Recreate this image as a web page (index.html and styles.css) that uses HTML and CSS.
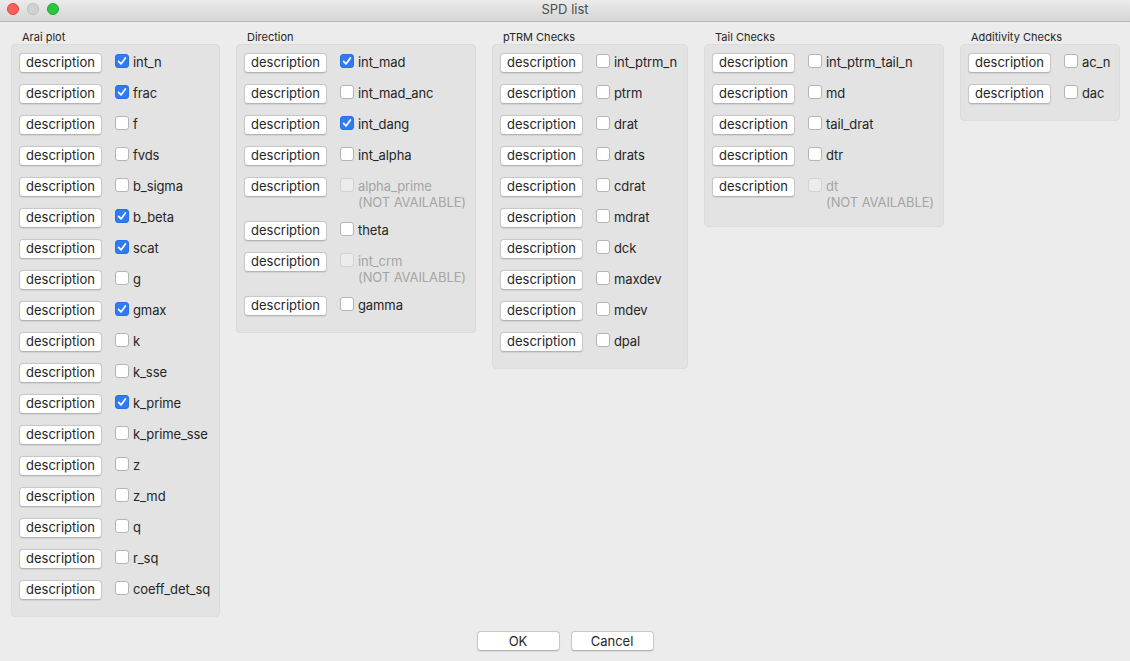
FILE: index.html
```html
<!DOCTYPE html>
<html>
<head>
<meta charset="utf-8">
<link rel="stylesheet" href="styles.css">
<title>SPD list</title>
</head>
<body>
<div class="window">
  <div class="titlebar">
    <div class="lights">
      <span class="light red"></span>
      <span class="light gray"></span>
      <span class="light green"></span>
    </div>
    <div class="title">SPD list</div>
  </div>

  <div class="groups">
    <section class="group w-arai">
      <div class="group-title">Arai plot</div>
      <div class="box">
        <div class="row"><button class="btn">description</button><span class="cb checked"><svg viewBox="0 0 14 14"><path d="M3.6 7.3 L6 9.9 L10.4 3.9"/></svg></span><span class="lbl">int_n</span></div>
        <div class="row"><button class="btn">description</button><span class="cb checked"><svg viewBox="0 0 14 14"><path d="M3.6 7.3 L6 9.9 L10.4 3.9"/></svg></span><span class="lbl">frac</span></div>
        <div class="row"><button class="btn">description</button><span class="cb"></span><span class="lbl">f</span></div>
        <div class="row"><button class="btn">description</button><span class="cb"></span><span class="lbl">fvds</span></div>
        <div class="row"><button class="btn">description</button><span class="cb"></span><span class="lbl">b_sigma</span></div>
        <div class="row"><button class="btn">description</button><span class="cb checked"><svg viewBox="0 0 14 14"><path d="M3.6 7.3 L6 9.9 L10.4 3.9"/></svg></span><span class="lbl">b_beta</span></div>
        <div class="row"><button class="btn">description</button><span class="cb checked"><svg viewBox="0 0 14 14"><path d="M3.6 7.3 L6 9.9 L10.4 3.9"/></svg></span><span class="lbl">scat</span></div>
        <div class="row"><button class="btn">description</button><span class="cb"></span><span class="lbl">g</span></div>
        <div class="row"><button class="btn">description</button><span class="cb checked"><svg viewBox="0 0 14 14"><path d="M3.6 7.3 L6 9.9 L10.4 3.9"/></svg></span><span class="lbl">gmax</span></div>
        <div class="row"><button class="btn">description</button><span class="cb"></span><span class="lbl">k</span></div>
        <div class="row"><button class="btn">description</button><span class="cb"></span><span class="lbl">k_sse</span></div>
        <div class="row"><button class="btn">description</button><span class="cb checked"><svg viewBox="0 0 14 14"><path d="M3.6 7.3 L6 9.9 L10.4 3.9"/></svg></span><span class="lbl">k_prime</span></div>
        <div class="row"><button class="btn">description</button><span class="cb"></span><span class="lbl">k_prime_sse</span></div>
        <div class="row"><button class="btn">description</button><span class="cb"></span><span class="lbl">z</span></div>
        <div class="row"><button class="btn">description</button><span class="cb"></span><span class="lbl">z_md</span></div>
        <div class="row"><button class="btn">description</button><span class="cb"></span><span class="lbl">q</span></div>
        <div class="row"><button class="btn">description</button><span class="cb"></span><span class="lbl">r_sq</span></div>
        <div class="row"><button class="btn">description</button><span class="cb"></span><span class="lbl">coeff_det_sq</span></div>
      </div>
    </section>

    <section class="group w-dir">
      <div class="group-title">Direction</div>
      <div class="box">
        <div class="row"><button class="btn">description</button><span class="cb checked"><svg viewBox="0 0 14 14"><path d="M3.6 7.3 L6 9.9 L10.4 3.9"/></svg></span><span class="lbl">int_mad</span></div>
        <div class="row"><button class="btn">description</button><span class="cb"></span><span class="lbl">int_mad_anc</span></div>
        <div class="row"><button class="btn">description</button><span class="cb checked"><svg viewBox="0 0 14 14"><path d="M3.6 7.3 L6 9.9 L10.4 3.9"/></svg></span><span class="lbl">int_dang</span></div>
        <div class="row"><button class="btn">description</button><span class="cb"></span><span class="lbl">int_alpha</span></div>
        <div class="row"><button class="btn">description</button><span class="cb disabled"></span><span class="lbl disabled">alpha_prime<br>(NOT AVAILABLE)</span></div>
        <div class="row"><button class="btn">description</button><span class="cb"></span><span class="lbl">theta</span></div>
        <div class="row"><button class="btn">description</button><span class="cb disabled"></span><span class="lbl disabled">int_crm<br>(NOT AVAILABLE)</span></div>
        <div class="row"><button class="btn">description</button><span class="cb"></span><span class="lbl">gamma</span></div>
      </div>
    </section>

    <section class="group w-ptrm">
      <div class="group-title">pTRM Checks</div>
      <div class="box">
        <div class="row"><button class="btn">description</button><span class="cb"></span><span class="lbl">int_ptrm_n</span></div>
        <div class="row"><button class="btn">description</button><span class="cb"></span><span class="lbl">ptrm</span></div>
        <div class="row"><button class="btn">description</button><span class="cb"></span><span class="lbl">drat</span></div>
        <div class="row"><button class="btn">description</button><span class="cb"></span><span class="lbl">drats</span></div>
        <div class="row"><button class="btn">description</button><span class="cb"></span><span class="lbl">cdrat</span></div>
        <div class="row"><button class="btn">description</button><span class="cb"></span><span class="lbl">mdrat</span></div>
        <div class="row"><button class="btn">description</button><span class="cb"></span><span class="lbl">dck</span></div>
        <div class="row"><button class="btn">description</button><span class="cb"></span><span class="lbl">maxdev</span></div>
        <div class="row"><button class="btn">description</button><span class="cb"></span><span class="lbl">mdev</span></div>
        <div class="row"><button class="btn">description</button><span class="cb"></span><span class="lbl">dpal</span></div>
      </div>
    </section>

    <section class="group w-tail">
      <div class="group-title">Tail Checks</div>
      <div class="box">
        <div class="row"><button class="btn">description</button><span class="cb"></span><span class="lbl">int_ptrm_tail_n</span></div>
        <div class="row"><button class="btn">description</button><span class="cb"></span><span class="lbl">md</span></div>
        <div class="row"><button class="btn">description</button><span class="cb"></span><span class="lbl">tail_drat</span></div>
        <div class="row"><button class="btn">description</button><span class="cb"></span><span class="lbl">dtr</span></div>
        <div class="row"><button class="btn">description</button><span class="cb disabled"></span><span class="lbl disabled">dt<br>(NOT AVAILABLE)</span></div>
      </div>
    </section>

    <section class="group w-add">
      <div class="group-title">Additivity Checks</div>
      <div class="box">
        <div class="row"><button class="btn">description</button><span class="cb"></span><span class="lbl">ac_n</span></div>
        <div class="row"><button class="btn">description</button><span class="cb"></span><span class="lbl">dac</span></div>
      </div>
    </section>
  </div>

  <div class="footer">
    <button class="btn btn-footer">OK</button>
    <button class="btn btn-footer">Cancel</button>
  </div>
</div>
</body>
</html>
```

FILE: styles.css
```css
* { box-sizing: border-box; }

html, body {
  margin: 0;
  padding: 0;
  width: 1130px;
  height: 661px;
  overflow: hidden;
  background: #ececec;
  font-family: Inter, "Noto Sans", "Liberation Sans", sans-serif;
  font-size: 13px;
  color: #262626;
}

.window {
  width: 1130px;
  height: 661px;
  display: flex;
  flex-direction: column;
  background: #ececec;
}

.titlebar {
  position: relative;
  height: 22px;
  flex: none;
  background: linear-gradient(#ebebeb, #d5d5d5);
  border-bottom: 1px solid #b9b9b9;
  display: flex;
  align-items: center;
  justify-content: center;
}

.lights {
  position: absolute;
  left: 7px;
  top: 3px;
  display: flex;
  gap: 8px;
}

.light {
  width: 12px;
  height: 12px;
  border-radius: 50%;
  display: block;
}
.light.red { background: #fd5e57; border: 0.5px solid #de4640; }
.light.gray { background: #d1d1d1; border: 0.5px solid #bcbcbc; }
.light.green { background: #28c73f; border: 0.5px solid #1eaa2e; }

.title {
  font-size: 13px;
  color: #4d4d4d;
  line-height: 16px;
  margin-top: -3px;
}

.groups {
  display: flex;
  align-items: flex-start;
  gap: 16px;
  padding: 9px 0 0 11px;
}

.group {
  display: flex;
  flex-direction: column;
  flex: none;
}
.w-arai { width: 209px; }
.w-dir { width: 240px; }
.w-ptrm { width: 196px; }
.w-tail { width: 240px; }
.w-add { width: 160px; }

.group-title {
  font-size: 11px;
  line-height: 12px;
  height: 13px;
  padding-left: 11px;
  color: #262626;
}

.box {
  background: #e3e3e3;
  border: 1px solid #dcdcdc;
  border-radius: 4px;
  padding: 8px 0 5px 7px;
}

.row {
  display: flex;
  align-items: flex-start;
  margin-bottom: 11px;
  white-space: nowrap;
}

.btn {
  font-family: inherit;
  font-size: 13px;
  color: #262626;
  width: 83px;
  height: 20px;
  padding: 0 0 3px;
  margin: 0;
  background: #ffffff;
  border: 1px solid #c8c8c8;
  border-bottom-color: #b4b4b4;
  border-radius: 4px;
  line-height: 16px;
  text-align: center;
  flex: none;
  box-shadow: 0 0.5px 1px rgba(0,0,0,0.08);
}

.cb {
  flex: none;
  width: 14px;
  height: 14px;
  margin: 1px 4px 0 13px;
  background: #ffffff;
  border: 1px solid #b4b4b4;
  border-radius: 3px;
  display: block;
}
.cb svg {
  display: block;
  width: 14px;
  height: 14px;
  margin: -1px;
}
.cb svg path {
  fill: none;
  stroke: #ffffff;
  stroke-width: 1.7;
  stroke-linecap: round;
  stroke-linejoin: round;
}
.cb.checked {
  background: #2f7bf5;
  border-color: #2a6fe0;
}
.cb.disabled {
  background: #ececec;
  border-color: #d2d2d2;
}

.lbl {
  line-height: 16px;
  padding-top: 1px;
  color: #262626;
  letter-spacing: -0.1px;
}
.lbl.disabled { color: #a5a5a5; }

.footer {
  margin-top: auto;
  display: flex;
  justify-content: center;
  gap: 11px;
  padding-bottom: 10px;
}
.btn-footer {
  width: 83px;
  padding: 0 0 1px;
}
```
